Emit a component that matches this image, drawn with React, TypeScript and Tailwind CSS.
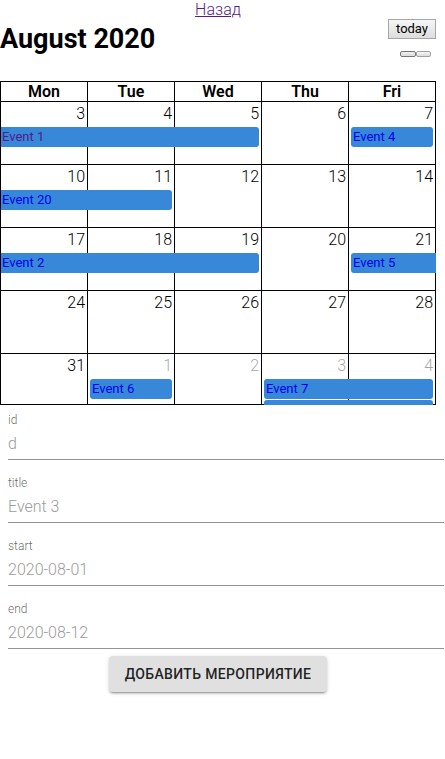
type CalendarEvent = { title: string; span: string; visited?: boolean };
type Day = { date: number; other?: boolean; events?: CalendarEvent[] };

const ONE = "left-[2px] right-[2px] pl-[2px] rounded-[3px]";
const FROM_EARLIER_2 = "left-0 w-[199%] pl-px rounded-r-[3px]";
const FROM_EARLIER_3 = "left-0 w-[300%] pl-px rounded-r-[3px]";
const TO_LATER = "left-[2px] -right-px pl-[2px] rounded-l-[3px]";
const TWO = "left-[2px] w-[197%] pl-[2px] rounded-[3px]";

const weekdays = ["Mon", "Tue", "Wed", "Thu", "Fri"];

const weeks: Day[][] = [
  [
    { date: 3, events: [{ title: "Event 1", span: FROM_EARLIER_3, visited: true }] },
    { date: 4 },
    { date: 5 },
    { date: 6 },
    { date: 7, events: [{ title: "Event 4", span: ONE }] },
  ],
  [
    { date: 10, events: [{ title: "Event 20", span: FROM_EARLIER_2 }] },
    { date: 11 },
    { date: 12 },
    { date: 13 },
    { date: 14 },
  ],
  [
    { date: 17, events: [{ title: "Event 2", span: FROM_EARLIER_3 }] },
    { date: 18 },
    { date: 19 },
    { date: 20 },
    { date: 21, events: [{ title: "Event 5", span: TO_LATER }] },
  ],
  [{ date: 24 }, { date: 25 }, { date: 26 }, { date: 27 }, { date: 28 }],
  [
    { date: 31 },
    { date: 1, other: true, events: [{ title: "Event 6", span: ONE }] },
    { date: 2, other: true },
    {
      date: 3,
      other: true,
      events: [
        { title: "Event 7", span: TWO },
        { title: "", span: TWO },
      ],
    },
    { date: 4, other: true },
  ],
];

const fields = [
  { name: "id", hint: "d" },
  { name: "title", hint: "Event 3" },
  { name: "start", hint: "2020-08-01" },
  { name: "end", hint: "2020-08-12" },
];

function DayCell({ day, last }: { day: Day; last: boolean }) {
  return (
    <td
      className={`relative border-r border-b border-black p-0 pr-[2px] text-right align-top leading-6 ${last ? "h-[51px]" : "h-[63px]"}`}
    >
      <span className={day.other ? "opacity-35" : ""}>{day.date}</span>
      {day.events?.map((event, i) =>
        i === 0 ? (
          <a
            key={i}
            href="#"
            className={`absolute top-[25px] z-10 h-5 bg-[#3788d8] text-left text-[13px] leading-5 font-normal ${event.span} ${event.visited ? "text-[#551a8b]" : "text-[#0000ee]"}`}
          >
            {event.title}
          </a>
        ) : (
          <div key={i} className="absolute inset-x-0 top-[46px] z-10 h-[5px]">
            <div className={`absolute inset-y-0 bg-[#3788d8] ${event.span} rounded-b-none`} />
          </div>
        ),
      )}
    </td>
  );
}

export default function App() {
  return (
    <main className="bg-white pb-6 font-['Roboto',sans-serif] text-base font-light text-black">
      <div className="mr-[9px] flex h-[19px] justify-center leading-[19px]">
        <a href="#" className="text-[#551a8b] underline">
          Назад
        </a>
      </div>

      <section className="mr-[9px]">
        <header className="flex h-[62px] items-start justify-between">
          <h2 className="text-[27px] leading-10 font-bold">August 2020</h2>
          <div className="flex flex-col items-end">
            <button
              type="button"
              className="h-5 w-12 border border-[#a6a6a6] bg-linear-to-b from-[#f6f6f6] to-[#dddddd] text-center text-[13px] leading-[18px] font-normal"
            >
              today
            </button>
            <div className="mt-3 mr-[5px] flex">
              <button
                type="button"
                aria-label="Previous month"
                className="h-[6px] w-4 rounded-[2px] border border-[#767676] bg-linear-to-b from-[#eeeeee] to-[#dddddd]"
              />
              <button
                type="button"
                aria-label="Next month"
                className="h-[6px] w-[15px] rounded-[2px] border border-[#a0a0a0] bg-linear-to-b from-[#f6f6f6] to-[#dddddd]"
              />
            </div>
          </div>
        </header>

        <table className="w-full table-fixed border-separate border-spacing-0 border-t border-l border-black">
          <thead>
            <tr>
              {weekdays.map((day) => (
                <th
                  key={day}
                  scope="col"
                  className="h-5 border-r border-b border-black p-0 leading-[19px] font-semibold"
                >
                  {day}
                </th>
              ))}
            </tr>
          </thead>
          <tbody>
            {weeks.map((week, w) => (
              <tr key={w}>
                {week.map((day) => (
                  <DayCell key={day.date} day={day} last={w === weeks.length - 1} />
                ))}
              </tr>
            ))}
          </tbody>
        </table>
      </section>

      <form className="pt-[7px]">
        <div className="flex flex-col gap-[15px] pr-px pl-2">
          {fields.map((field) => (
            <div key={field.name} className="flex flex-col">
              <label htmlFor={field.name} className="text-xs leading-4 text-[#000000a0]">
                {field.name}
              </label>
              <input
                id={field.name}
                name={field.name}
                placeholder={field.hint}
                className="h-8 w-full border-b border-[#949494] bg-transparent pb-px outline-none placeholder:text-[#9c9c9c]"
              />
            </div>
          ))}
        </div>
        <div className="mt-[7px] mr-[9px] flex justify-center">
          <button
            type="button"
            className="h-9 rounded bg-[#e0e0e0] px-4 text-sm font-medium tracking-wide text-[#000000de] uppercase shadow-[0_3px_1px_-2px_rgba(0,0,0,0.2),0_2px_2px_0_rgba(0,0,0,0.14),0_1px_5px_0_rgba(0,0,0,0.12)]"
          >
            Добавить мероприятие
          </button>
        </div>
      </form>
    </main>
  );
}
